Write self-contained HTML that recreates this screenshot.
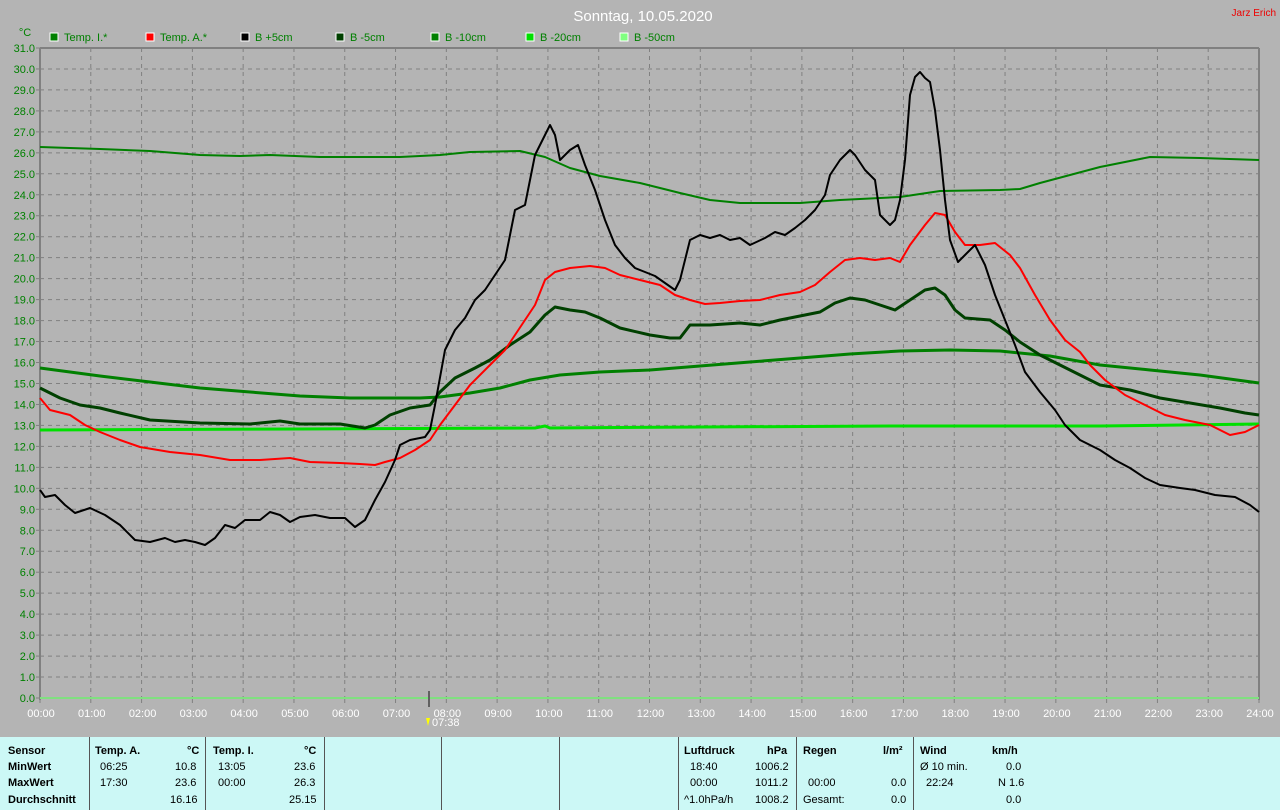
<!DOCTYPE html>
<html><head><meta charset="utf-8"><style>
body{margin:0;width:1280px;height:810px;background:#b4b4b4;font-family:"Liberation Sans",sans-serif;overflow:hidden;position:relative}
.t{position:absolute;font-size:11px;white-space:nowrap}
.tb{position:absolute;top:737px;left:0;width:1280px;height:73px;background:#ccf8f6}
.v{position:absolute;top:737px;width:1px;height:73px;background:#555}
.b{font-weight:bold}
</style></head><body>
<svg width="1280" height="737" style="position:absolute;left:0;top:0" font-family="Liberation Sans, sans-serif">
<text x="643" y="21" fill="#fff" font-size="15" text-anchor="middle">Sonntag, 10.05.2020</text>
<text x="1276" y="16" fill="#e00" font-size="10" text-anchor="end">Jarz Erich</text>
<text x="25" y="36" fill="#008000" font-size="11" text-anchor="middle">°C</text>
<g font-size="11" fill="#008000">
<rect x="50" y="33" width="8" height="8" fill="#008000" stroke="#fff"/><text x="64" y="41">Temp. I.*</text>
<rect x="146" y="33" width="8" height="8" fill="#f00" stroke="#fff"/><text x="160" y="41">Temp. A.*</text>
<rect x="241" y="33" width="8" height="8" fill="#000" stroke="#fff"/><text x="255" y="41">B +5cm</text>
<rect x="336" y="33" width="8" height="8" fill="#004000" stroke="#fff"/><text x="350" y="41">B -5cm</text>
<rect x="431" y="33" width="8" height="8" fill="#008000" stroke="#fff"/><text x="445" y="41">B -10cm</text>
<rect x="526" y="33" width="8" height="8" fill="#00e000" stroke="#fff"/><text x="540" y="41">B -20cm</text>
<rect x="620" y="33" width="8" height="8" fill="#80ff80" stroke="#fff"/><text x="634" y="41">B -50cm</text>
</g>
<g id="grid" stroke="#808080" stroke-dasharray="4,4" stroke-width="1"></g>
<line x1="40" y1="48" x2="1259" y2="48" stroke="#808080" stroke-width="2"/>
<line x1="40" y1="48" x2="40" y2="700" stroke="#808080" stroke-width="2"/>
<line x1="1259" y1="48" x2="1259" y2="700" stroke="#808080" stroke-width="2"/>
<g id="lab" font-size="11" fill="#008000" text-anchor="end"></g>
<g id="xl" font-size="11" fill="#fff" text-anchor="middle"></g>
<line x1="40" y1="698" x2="1259" y2="698" stroke="#80e080" stroke-width="2"/>
<line x1="429" y1="691" x2="429" y2="707" stroke="#606060" stroke-width="2"/>
<path d="M426 718 L430 718 L428 726 Z" fill="#ff0"/>
<text x="432" y="726" fill="#fff" font-size="11">07:38</text>
<g fill="none" stroke-linejoin="round">
<polyline stroke="#008000" stroke-width="2" points="40,147 100,149 150,151 200,155 240,156 270,155 320,157 400,157 440,155 470,152 520,151 545,157 570,168 600,176 640,183 680,193 710,200 740,203 800,203 840,200 900,197 940,191 1000,190 1020,189 1040,183 1070,175 1100,167 1150,157 1200,158 1259,160"/>
<polyline stroke="#008000" stroke-width="3" points="40,368 70,372 100,376 150,382 200,388 250,392 300,396 350,398 420,398 440,397 470,393 500,388 530,380 560,375 600,372 650,370 700,366 750,362 800,358 850,354 900,351 950,350 1000,351 1050,356 1100,365 1150,370 1200,375 1259,383"/>
<polyline stroke="#00e000" stroke-width="3" points="40,430 300,429 535,428 545,426 550,428 700,427 900,426 1100,426 1259,424"/>
<polyline stroke="#004000" stroke-width="3" points="40,388 60,398 80,405 100,408 120,413 150,420 200,423 250,424 280,421 300,424 340,424 365,428 375,425 390,415 410,408 430,405 440,392 455,378 475,368 490,360 510,345 530,332 545,315 555,307 570,310 585,312 600,318 620,328 650,335 670,338 680,338 690,325 710,325 740,323 760,325 780,320 800,316 820,312 835,303 850,298 865,300 880,305 895,310 910,300 925,290 935,288 945,295 955,310 965,318 990,320 1005,330 1020,342 1040,355 1060,365 1080,375 1100,385 1130,390 1160,398 1190,403 1220,408 1245,413 1259,415"/>
<polyline stroke="#f00" stroke-width="2" points="40,398 50,410 70,415 85,425 100,432 120,440 140,447 170,452 200,455 230,460 260,460 290,458 310,462 340,463 360,464 375,465 385,462 400,458 415,450 430,440 440,425 455,405 470,385 490,365 505,350 515,335 525,320 535,305 545,280 555,272 570,268 590,266 605,268 620,275 640,280 660,285 675,295 690,300 705,304 720,303 740,301 760,300 780,295 800,292 815,285 830,272 845,260 860,258 875,260 890,258 900,262 910,245 925,225 935,213 945,215 955,232 965,245 980,245 995,243 1010,255 1020,268 1035,295 1050,320 1065,340 1080,352 1090,365 1105,380 1125,395 1145,405 1165,415 1185,420 1210,425 1230,435 1245,432 1259,425"/>
<polyline stroke="#000" stroke-width="2" points="40,490 45,497 55,495 65,505 75,513 90,508 105,515 120,525 135,540 150,542 165,538 175,542 185,540 195,542 205,545 215,538 225,525 235,528 245,520 260,520 270,512 280,515 290,522 300,517 315,515 330,518 345,518 355,527 365,520 375,500 385,482 395,460 400,445 410,440 425,437 430,430 435,405 445,350 455,330 465,318 475,300 485,290 495,275 505,260 515,210 525,205 535,155 545,135 550,125 555,135 560,160 570,150 578,145 585,165 595,190 605,220 615,245 625,258 635,268 645,272 655,276 665,283 675,290 680,280 690,240 700,235 710,238 720,235 730,240 740,238 750,245 765,238 775,232 785,235 795,228 805,220 815,210 825,195 830,175 840,160 850,150 855,155 865,170 875,180 880,215 890,225 895,220 900,200 905,160 910,95 915,77 920,72 925,78 930,82 935,110 940,150 945,200 950,240 958,262 965,255 975,245 985,265 995,295 1005,320 1015,345 1025,372 1040,392 1055,410 1065,425 1080,440 1100,450 1115,460 1130,468 1145,478 1160,485 1180,488 1195,490 1215,495 1235,497 1250,505 1259,512"/>
</g>
</svg>
<div class="tb"></div>
<div class="v" style="left:89px"></div><div class="v" style="left:205px"></div><div class="v" style="left:324px"></div><div class="v" style="left:441px"></div><div class="v" style="left:559px"></div><div class="v" style="left:678px"></div><div class="v" style="left:796px"></div><div class="v" style="left:913px"></div>
<div class="t b" style="left:8px;top:745px">Sensor</div><div class="t b" style="left:8px;top:761px">MinWert</div><div class="t b" style="left:8px;top:777px">MaxWert</div><div class="t b" style="left:8px;top:794px">Durchschnitt</div>
<div class="t b" style="left:95px;top:745px">Temp. A.</div><div class="t b" style="left:187px;top:745px">°C</div>
<div class="t" style="left:100px;top:761px">06:25</div><div class="t" style="left:175px;top:761px">10.8</div>
<div class="t" style="left:100px;top:777px">17:30</div><div class="t" style="left:175px;top:777px">23.6</div>
<div class="t" style="left:170px;top:794px">16.16</div>
<div class="t b" style="left:213px;top:745px">Temp. I.</div><div class="t b" style="left:304px;top:745px">°C</div>
<div class="t" style="left:218px;top:761px">13:05</div><div class="t" style="left:294px;top:761px">23.6</div>
<div class="t" style="left:218px;top:777px">00:00</div><div class="t" style="left:294px;top:777px">26.3</div>
<div class="t" style="left:289px;top:794px">25.15</div>
<div class="t b" style="left:684px;top:745px">Luftdruck</div><div class="t b" style="left:767px;top:745px">hPa</div>
<div class="t" style="left:690px;top:761px">18:40</div><div class="t" style="left:755px;top:761px">1006.2</div>
<div class="t" style="left:690px;top:777px">00:00</div><div class="t" style="left:755px;top:777px">1011.2</div>
<div class="t" style="left:684px;top:794px">^1.0hPa/h</div><div class="t" style="left:755px;top:794px">1008.2</div>
<div class="t b" style="left:803px;top:745px">Regen</div><div class="t b" style="left:883px;top:745px">l/m²</div>
<div class="t" style="left:808px;top:777px">00:00</div><div class="t" style="left:891px;top:777px">0.0</div>
<div class="t" style="left:803px;top:794px">Gesamt:</div><div class="t" style="left:891px;top:794px">0.0</div>
<div class="t b" style="left:920px;top:745px">Wind</div><div class="t b" style="left:992px;top:745px">km/h</div>
<div class="t" style="left:920px;top:761px">Ø 10 min.</div><div class="t" style="left:1006px;top:761px">0.0</div>
<div class="t" style="left:926px;top:777px">22:24</div><div class="t" style="left:998px;top:777px">N 1.6</div>
<div class="t" style="left:1006px;top:794px">0.0</div>
<script>
var ns="http://www.w3.org/2000/svg",g=document.getElementById("grid"),lab=document.getElementById("lab"),xl=document.getElementById("xl");
function el(p,t,a,txt){var e=document.createElementNS(ns,t);for(var k in a)e.setAttribute(k,a[k]);if(txt)e.textContent=txt;p.appendChild(e);}
for(var i=0;i<=31;i++){var y=698-i*650/31;if(i>0&&i<31)el(g,"line",{x1:40,x2:1259,y1:y,y2:y});el(lab,"text",{x:35,y:y+4},i.toFixed(1));el(g,"line",{x1:36,x2:40,y1:y,y2:y,"stroke-dasharray":"none"});}
for(var h=0;h<=24;h++){var x=40+h*1219/24;if(h>0&&h<24)el(g,"line",{x1:x,x2:x,y1:48,y2:698});el(g,"line",{x1:x,x2:x,y1:698,y2:703,"stroke-dasharray":"none"});el(xl,"text",{x:x+1,y:717},(h<10?"0":"")+h+":00");}
</script>
</body></html>
